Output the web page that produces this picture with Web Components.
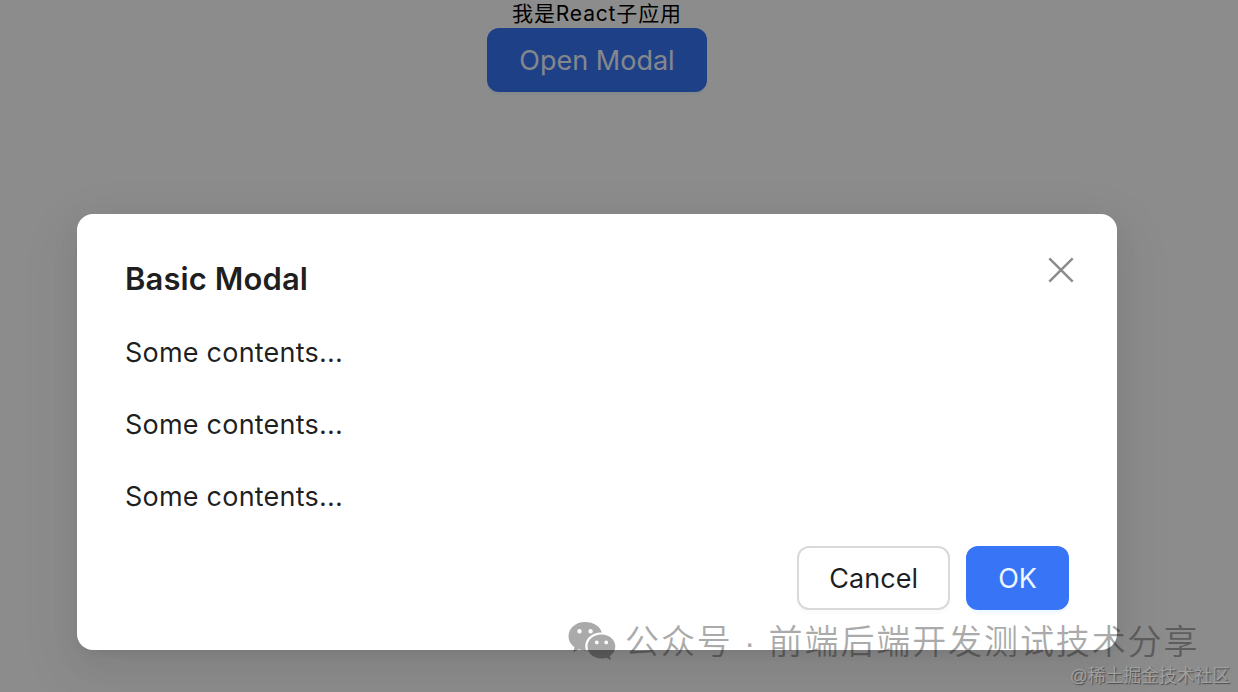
<!DOCTYPE html>
<html lang="zh-CN">
<head>
<meta charset="utf-8">
<title>React子应用</title>
<style>
  html, body {
    margin: 0;
    height: 100%;
    overflow: hidden;
  }
  body {
    background: #fff;
    font-family: Inter, "Noto Sans CJK SC", sans-serif;
  }
</style>
</head>
<body>
<sub-app>
  <span slot="title">我是React子应用</span>
  <ui-button type="primary">Open Modal</ui-button>
  <basic-modal slot="overlay" heading="Basic Modal">
    <p>Some contents...</p>
    <p>Some contents...</p>
    <p>Some contents...</p>
    <ui-button slot="footer">Cancel</ui-button>
    <ui-button slot="footer" type="primary">OK</ui-button>
  </basic-modal>
  <account-mark slot="overlay">公众号 · 前端后端开发测试技术分享</account-mark>
  <site-mark slot="overlay">@稀土掘金技术社区</site-mark>
</sub-app>

<script>
class SubApp extends HTMLElement {
    constructor() {
        super();
        this.attachShadow({ mode: "open" });
        this.shadowRoot.innerHTML = /*html*/`
      <style>
      :host{
        display: block;
        position: relative;
        height: 692px;
        overflow: hidden;
      }
      .page{
        width: 1194px;
        display: flex;
        flex-direction: column;
        align-items: center;
      }
      .title{
        height: 28px;
        line-height: 28px;
        font-size: 21px;
        letter-spacing: .85px;
        color: #000;
        white-space: nowrap;
      }
      </style>
      <div class="page">
        <div class="title"><slot name="title"></slot></div>
        <slot></slot>
      </div>
      <slot name="overlay"></slot>`;
    }
}

class UiButton extends HTMLElement {
    constructor() {
        super();
        this.attachShadow({ mode: "open" });
        this.shadowRoot.innerHTML = /*html*/`
      <style>
      :host{
        display: inline-block;
      }
      button{
        display: block;
        box-sizing: border-box;
        height: 64px;
        padding: 1px 30px 0;
        border: 2px solid #d9d9d9;
        border-radius: 12px;
        background: #fff;
        box-shadow: 0 4px 0 rgba(0,0,0,.01);
        color: rgba(0,0,0,.88);
        font: inherit;
        font-size: 27px;
        line-height: 60px;
        letter-spacing: .08px;
        white-space: nowrap;
      }
      :host([type="primary"]) button{
        border-color: #3875f6;
        background: #3875f6;
        box-shadow: 0 3px 0 rgba(5,145,255,.06);
        color: #f0f6ff;
        letter-spacing: 0;
      }
      </style>
      <button type="button"><slot></slot></button>`;
    }
}

class BasicModal extends HTMLElement {
    constructor() {
        super();
        this.attachShadow({ mode: "open" });
    }

    connectedCallback() {
        this.shadowRoot.innerHTML = /*html*/`
      <style>
      :host{
        position: absolute;
        inset: 0;
        display: block;
        background: rgba(0,0,0,.45);
      }
      .dialog{
        position: relative;
        box-sizing: border-box;
        width: 1040px;
        height: 436px;
        margin: 214px 0 0 77px;
        padding: 40px 48px;
        display: flex;
        flex-direction: column;
        border-radius: 16px;
        background: #fff;
        box-shadow: 0 12px 32px 0 rgba(0,0,0,.06),
          0 6px 12px -8px rgba(0,0,0,.12),
          0 18px 56px 16px rgba(0,0,0,.04);
        color: rgba(0,0,0,.88);
      }
      .heading{
        margin: 0 0 27px;
        font-size: 31px;
        font-weight: 600;
        line-height: 50px;
        letter-spacing: .1px;
      }
      .body{
        flex: 1;
        font-size: 27px;
        line-height: 44px;
        letter-spacing: .22px;
      }
      ::slotted(p){
        margin: 0 0 28px;
      }
      ::slotted(p:last-of-type){
        margin: 0;
      }
      .footer{
        display: flex;
        justify-content: flex-end;
        gap: 16px;
      }
      .close{
        position: absolute;
        top: 34px;
        right: 34px;
        width: 44px;
        height: 44px;
        padding: 0;
        border: 0;
        background: none;
      }
      .close svg{
        display: block;
      }
      </style>
      <div class="dialog">
        <h2 class="heading">${this.getAttribute("heading")}</h2>
        <div class="body"><slot></slot></div>
        <div class="footer"><slot name="footer"></slot></div>
        <button class="close" type="button" aria-label="Close">
          <svg width="44" height="44" viewBox="0 0 44 44">
            <path d="M10.3 10.3l23.4 23.4M33.7 10.3L10.3 33.7" fill="none" stroke="#8c8c8c" stroke-width="2.5"/>
          </svg>
        </button>
      </div>`;
    }
}

class AccountMark extends HTMLElement {
    constructor() {
        super();
        this.attachShadow({ mode: "open" });
        this.shadowRoot.innerHTML = /*html*/`
      <style>
      :host{
        position: absolute;
        left: 568px;
        top: 620px;
        display: flex;
        align-items: center;
        height: 44px;
        opacity: .33;
        color: #000;
        font-family: "Liberation Sans", "Noto Sans CJK SC", sans-serif;
        font-size: 34px;
        font-weight: 350;
        line-height: 42px;
        letter-spacing: 1.9px;
        white-space: nowrap;
      }
      svg{
        flex: none;
        margin-right: 8px;
      }
      </style>
      <svg width="49" height="44" viewBox="0 0 49 44">
        <path fill-rule="evenodd" d="M17 2C7.500 2 .500 8.300 .500 16.300c0 4.500 2.300 8.400 6 11L5.200 32.200l5.500-3c2 .6 4.100 1 6.300 1h1c-3-10 5-17.600 15.800-17.600C32.300 6.300 25.500 2 17 2zM11.500 9a2.200 2.200 0 1 1 0 4.400 2.200 2.200 0 0 1 0-4.400zM22.600 9a2.200 2.200 0 1 1 0 4.400 2.200 2.200 0 0 1 0-4.400z"/>
        <path fill-rule="evenodd" d="M33.500 14.500c-8 0-14 5.300-14 12s6 12 14 12c1.800 0 3.400-.3 5-.8l4.500 2.600-1.200-4.300c3.400-2.200 5.500-5.600 5.500-9.500 0-6.700-6-12-13.800-12zM28.800 20.500a1.900 1.900 0 1 1 0 3.800 1.900 1.900 0 0 1 0-3.800zM38.200 20.500a1.900 1.900 0 1 1 0 3.800 1.900 1.900 0 0 1 0-3.800z"/>
      </svg>
      <slot></slot>`;
    }
}

class SiteMark extends HTMLElement {
    constructor() {
        super();
        this.attachShadow({ mode: "open" });
        this.shadowRoot.innerHTML = /*html*/`
      <style>
      :host{
        position: absolute;
        right: 8px;
        bottom: 5px;
        color: #a0a0a0;
        font-family: "Liberation Sans", "Noto Sans CJK SC", sans-serif;
        font-size: 17.8px;
        line-height: 22px;
        text-shadow: 1px 1px 1px rgba(0,0,0,.45);
        white-space: nowrap;
      }
      </style>
      <slot></slot>`;
    }
}

customElements.define("sub-app", SubApp);
customElements.define("ui-button", UiButton);
customElements.define("basic-modal", BasicModal);
customElements.define("account-mark", AccountMark);
customElements.define("site-mark", SiteMark);
</script>
</body>
</html>
